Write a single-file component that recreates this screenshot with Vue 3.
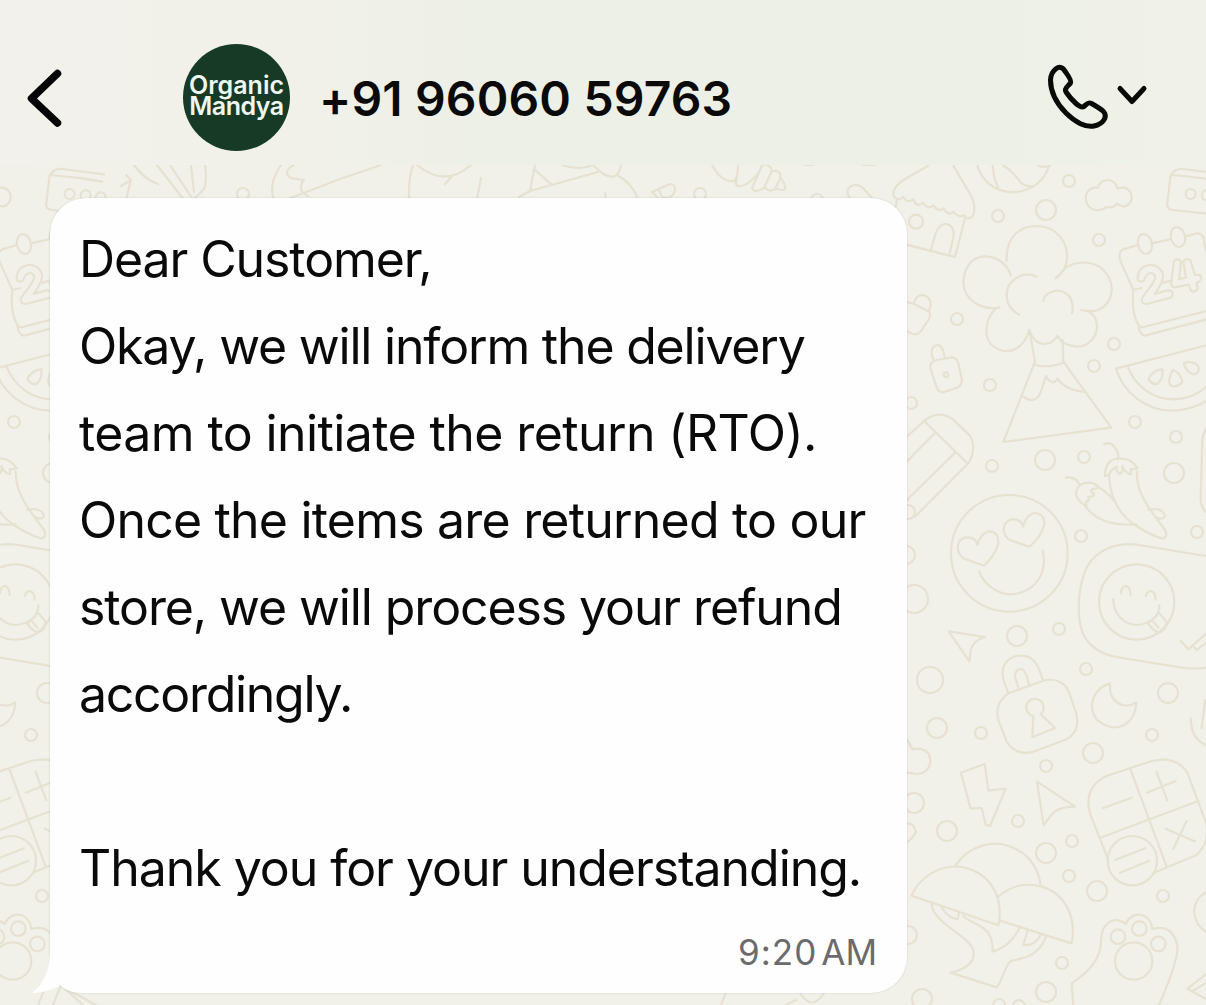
<template>
  <div class="chat">
    <svg class="wallpaper" viewBox="0 0 1206 1005" aria-hidden="true">
      <defs>
        <g id="doodles">
          <g transform="translate(890 160) scale(0.33333)">
            <path d="M115 17L40 60Q5 85 10 105Q22 128 40 110Q50 132 70 118Q80 145 100 128Q112 150 130 136Q145 158 160 145Q175 170 190 155Q205 175 222 165Q235 185 250 165Q258 140 245 110L190 17" />
            <path d="M20 120L18 140M225 175L195 291L0 240M50 255L195 291M123 270L137 220Q148 190 172 192Q196 202 190 232L178 285" />
            <circle cx="78" cy="185" r="21" />
            <path d="M262 17C275 60 310 95 370 97C430 92 465 60 477 17M308 17Q312 60 325 84M340 17Q365 30 390 65Q405 80 425 78M445 17Q462 24 480 17" />
            <path d="M622 150C590 150 580 115 593 95Q605 80 623 84Q628 62 653 60Q677 62 683 86Q708 76 722 97C732 125 712 145 692 137Q680 130 680 132Q670 145 650 141Q635 152 622 150Z" />
            <path d="M842 45L832 130Q830 148 848 150L990 165M842 45Q855 25 880 27L1005 43M842 45Q920 50 1000 65" />
            <circle cx="902" cy="102" r="15" /><circle cx="950" cy="106" r="15" /><circle cx="995" cy="112" r="15" />
            <path d="M363 347C350 305 310 285 275 290C230 297 210 355 226 395C242 432 290 452 328 442M350 303C347 240 380 198 441 198C500 198 538 250 530 303Q526 335 496 355M520 330C550 300 610 300 640 330C680 370 670 430 625 450Q600 458 574 450M440 350C400 330 350 360 350 405Q350 445 388 464M460 423C465 395 500 385 525 398Q555 417 546 460M318 445C285 475 280 530 305 555C350 592 400 570 418 510Q430 550 462 552Q490 550 502 527Q515 556 560 560C600 560 625 525 620 490Q615 460 590 452" />
            <path d="M418 510L435 605L340 846L664 803L520 605L518 540M435 615Q480 625 520 608M400 710Q425 730 445 710C460 685 460 665 468 648Q478 668 486 664Q492 673 503 655Q525 690 580 695" />
            <path d="M743 255L700 268Q682 278 692 305L730 390L755 384M820 368L845 361M785 250L840 238M885 230L920 220Q945 220 942 250L970 335M730 390C725 440 730 470 745 495Q752 505 765 500L980 445M745 495Q748 525 765 527L980 470" />
            <ellipse cx="765" cy="252" rx="21" ry="30" transform="rotate(-14 765 252)" /><ellipse cx="864" cy="231" rx="21" ry="30" transform="rotate(-14 864 231)" />
            <path d="M743 360C740 320 780 305 805 322C830 342 820 365 794 402L832 391Q850 390 848 405Q846 413 832 416L770 432Q752 432 756 415C770 390 795 370 796 350C790 330 768 340 763 360Q751 370 743 360Z" />
            <path d="M852 303Q865 292 873 305L867 358L888 352L880 305Q888 292 901 300L915 345L930 345Q938 356 927 365L920 368L923 386Q913 402 902 390L896 374L854 382Q840 380 844 365Z" />
            <path d="M678 626L1010 540M678 626C700 700 770 752 845 752C910 750 970 720 1000 680M712 617C735 680 790 718 850 718C910 717 950 690 980 645" />
            <path d="M817 628C795 628 768 655 779 662Q790 675 802 672C820 655 818 645 817 628ZM848 630C838 650 832 670 845 678Q864 682 877 666C874 650 863 635 848 630ZM882 610C900 602 920 608 926 622Q927 643 910 643C895 638 882 622 882 610Z" />
            <path d="M42 424L72 432Q75 405 100 405Q125 412 122 438L116 453Q125 465 115 480L92 515Q80 530 60 518L30 502M72 432L112 452" />
            <path d="M130 598C115 565 135 552 150 557Q160 565 164 593M140 600L185 592Q200 592 205 610L215 655Q218 675 202 683L160 697Q145 697 139 680L121 625Q118 605 140 600Z" />
            <circle cx="168" cy="644" r="7" />
          </g>
          <g transform="translate(890 400) scale(0.33333)">
            <path d="M0 157L105 60Q145 30 185 55L240 107Q262 145 235 190L75 350M105 65L232 190M135 98L0 236M195 158L10 340M0 315L55 300" />
            <circle cx="358" cy="460" r="175" />
            <path d="M282 497L220 475C195 455 200 420 225 413Q255 408 263 435Q268 405 295 394Q325 392 325 430Q317 465 282 497ZM418 440L358 420C332 400 338 367 363 359Q392 354 400 380Q405 348 432 339Q462 338 463 372Q455 410 418 440ZM267 515C285 560 330 583 362 583C430 580 475 525 458 450" />
            <path d="M642 133C665 120 688 150 684 178M645 228Q645 175 690 175Q725 175 743 205L722 208Q728 230 712 218Q700 210 697 198Q700 218 690 222Q678 218 680 200Q660 210 657 225ZM657 225C660 300 690 345 735 375Q780 405 815 415Q835 415 825 390C790 340 740 290 740 215M528 233Q555 228 568 252M590 318C545 300 550 250 595 248Q615 248 628 263L605 268Q600 275 613 282Q610 292 594 290Q600 305 587 305ZM585 318C620 365 680 378 740 373M628 263Q655 280 675 305M775 330Q820 320 825 350Q815 362 795 350" />
            <path d="M948 468L740 434C660 425 600 465 583 520C565 570 560 640 575 690C590 740 640 765 680 771L870 802Q920 810 960 800M978 60Q940 80 937 120L932 290Q930 340 978 350" />
            <circle cx="740" cy="606" r="113" />
            <path d="M693 580C695 550 720 550 722 585M767 588C775 565 797 570 797 599M670 597C670 640 700 675 742 675C780 670 810 650 808 615M775 670L800 648M808 640L830 665Q830 690 808 697Q795 697 775 672M790 665L805 683" />
            <path d="M872 722L895 748L1000 655M912 742L920 750L1010 680" />
            <path d="M176 694L286 711Q250 720 242 750L238 784Z" />
          </g>
          <g transform="translate(890 640) scale(0.33333)">
            <path d="M0 270L52 300L68 328Q95 320 115 340C130 370 115 400 80 402L52 398L0 430M0 550L52 550Q72 550 78 575Q72 590 55 605L0 610" />
            <path d="M355 160L340 118C330 75 355 50 388 47C420 45 440 65 450 95L460 122M387 149L375 112Q375 88 393 87Q408 88 418 138M355 160L460 122C500 112 530 130 540 165L560 225Q570 275 530 298L430 335Q380 350 350 305L325 240Q312 190 355 160Z" />
            <path d="M452 222A26 26 0 1 0 430 228L427 292L495 264L452 222" />
            <path d="M660 130C610 145 590 200 620 238C670 285 735 260 739 187C705 210 655 190 660 130Z" />
            <path d="M213 398L284 372L295 452L347 446L300 558L287 554L275 504L242 506ZM441 425L555 500Q500 500 480 530L461 556Z" />
            <path d="M650 408L785 363Q860 345 893 400L945 540Q965 600 920 645L795 697M655 660L600 520Q580 440 650 408M722 390L830 680M635 592L925 483M638 505L725 473M770 458L857 423M800 396L832 482M827 566L914 604M890 543L850 627M675 660L765 625M690 698L778 662" />
            <circle cx="727" cy="662" r="74" />
            <path d="M198 675C225 630 285 605 335 612C400 625 445 670 452 738M64 767C90 710 150 675 205 680C290 690 345 760 325 856ZM325 770C370 730 420 730 455 740C525 760 560 830 545 910L330 842" />
            <path d="M125 793C130 850 235 885 250 930Q260 980 182 998L320 1042C340 1020 340 980 365 962C400 955 445 950 468 890M155 803Q175 835 203 838L207 818M220 828C250 860 310 850 308 935Q360 920 388 865M412 875L400 915Q435 918 452 885" />
            <path d="M550 1100L545 1030C590 1000 635 960 633 900C635 850 670 825 707 852C725 810 780 815 787 867C850 850 875 910 855 965C845 1010 825 1050 805 1100" />
            <circle cx="731" cy="963" r="56" /><circle cx="684" cy="890" r="22" /><circle cx="748" cy="866" r="22" /><circle cx="805" cy="912" r="22" />
            <path d="M903 235Q900 300 960 320M945 180L935 265M990 750C930 750 915 785 912 812C915 850 930 870 960 880M990 1100L892 1046L970 985M905 1055L980 1010" />
          </g>
          <circle v-for="(dot, i) in dots" :key="i" :cx="dot[0]" :cy="dot[1]" :r="dot[2]" />
        </g>
      </defs>
      <g class="ink">
        <use href="#doodles" />
        <use href="#doodles" x="-1121" />
        <!-- tops of the doodles between the header and the bubble -->
        <path d="M126 175L131 180L126 200M131 180L121 186" />
        <path d="M134 165Q145 180 158 184M157 165L184 200M170 165L192 198M191 165L194 192M205 165Q208 188 201 192L195 198" />
        <path d="M281 165Q268 184 274 200M294 165C284 170 285 178 296 179L304 180Q296 190 308 196M288 199L340 179L381 165" />
        <path d="M413 165Q408 180 409 199M417 165Q445 188 471 165M453 175L445 184M481 178L477 199" />
        <path d="M535 165L530 191L519 197M535 170L552 185M530 191L598 172M562 165Q580 171 593 165L602 173Q618 183 621 165M617 175Q632 183 638 199M605 193L606 199" />
        <path d="M659 199L652 192L670 184C678 184 676 195 668 198L662 197L659 190" />
        <path d="M712 165Q722 183 734 181Q738 178 738 165M762 165C760 175 745 188 738 186Q734 184 737 178M762 165Q770 163 772 171L764 188Q755 194 752 188L762 166M773 171Q782 170 780 179L775 189Q768 193 765 187M780 177Q788 188 784 190L776 189" />
        <path d="M804 165L813 165M863 165L875 165M850 198C842 188 854 182 862 187L872 198" />
        <path d="M53 1005L61 985L83 1005M721 1005L726 992M786 1005L796 1000M800 993Q812 1012 824 993" />
      </g>
    </svg>

    <header class="topbar">
      <svg class="back" viewBox="0 0 40 64" aria-hidden="true">
        <path d="M33.500 7.500L7.500 32.500L33.500 57" />
      </svg>
      <div class="avatar"><span>Organic</span><span class="lower">Mandya</span></div>
      <h1 class="contact">+91 96060 59763</h1>
      <svg class="call" viewBox="0 0 110 80" aria-hidden="true">
        <path d="M24.5 18.5C20 11 11 18 10.500 28C10.500 52 38 77.500 54 74C63 72 68 65 63.500 59.500C61 57 55 53.500 51.500 51.500C48 49.500 47 52 44 54.500C42 56 40 55 36 51.500C31 47 28 43 26 40C23.500 36 28.500 34 30.500 31C32 28 26.500 21.500 24.500 18.500Z" />
        <path d="M80 36.500L92 49.500L104 36.500" />
      </svg>
    </header>

    <main class="thread">
      <section class="bubble">
        <svg class="tail" viewBox="0 0 50 40" aria-hidden="true">
          <path class="tail-shape" d="M18 0Q17 27 0 40Q17 39 29 32L48 8V0Z" />
        </svg>
        <p
          v-for="(line, i) in lines"
          :key="i"
          class="line"
          :style="{ letterSpacing: line.spacing + 'px' }"
        >
          {{ line.text }}
        </p>
        <time class="stamp">9:20<span class="meridiem">AM</span></time>
      </section>
    </main>
  </div>
</template>

<script setup>
const lines = [
  { text: "Dear Customer,", spacing: -1.1 },
  { text: "Okay, we will inform the delivery", spacing: -1.2 },
  { text: "team to initiate the return (RTO).", spacing: -0.6 },
  { text: "Once the items are returned to our", spacing: -0.8 },
  { text: "store, we will process your refund", spacing: -1.11 },
  { text: "accordingly.", spacing: -1.3 },
  { text: "", spacing: 0 },
  { text: "Thank you for your understanding.", spacing: -1.05 },
];

// x, y, radius
const dots = [
  [1069, 181, 6], [1046, 210, 10], [998, 216, 6], [1099, 240, 6],
  [957, 319, 6], [1114, 344, 6], [1094, 366, 6], [990, 385, 6],
  [911, 403, 6], [1135, 422, 6], [1176, 437, 6], [992, 466, 6],
  [1045, 460, 10], [1084, 457, 6], [1174, 473, 10], [908, 512, 7],
  [906, 555, 9], [1081, 536, 6], [1197, 532, 6], [914, 599, 14],
  [1017, 636, 10], [1059, 629, 6], [930, 680, 13], [1086, 669, 6],
  [1168, 693, 10], [937, 728, 10], [981, 733, 6], [1152, 735, 6],
  [1093, 753, 10], [1046, 766, 6], [914, 803, 10], [1018, 821, 6],
  [947, 831, 10], [1072, 841, 6], [1046, 853, 10], [1069, 876, 6],
  [1097, 891, 10], [1163, 896, 6], [908, 935, 9], [1062, 963, 6],
  [1046, 992, 10], [922, 999, 10], [999, 1005, 6], [1019, 1006, 6],
  [243, 194, 6], [700, 194, 6], [817, 200, 6],
];
</script>

<style>
body {
  margin: 0;
}
</style>

<style scoped>
.chat {
  position: relative;
  display: flex;
  flex-direction: column;
  width: 1206px;
  height: 1005px;
  overflow: hidden;
  background: #f2f1e9;
  font-family: Inter, "Liberation Sans", sans-serif;
  color: #0a0a0a;
}

.wallpaper {
  position: absolute;
  inset: 0;
  width: 1206px;
  height: 1005px;
}

.ink {
  fill: none;
  stroke: #e5e1d3;
  stroke-width: 2.2px;
  stroke-linecap: round;
  stroke-linejoin: round;
}

#doodles path,
#doodles circle,
#doodles ellipse {
  vector-effect: non-scaling-stroke;
}

.topbar {
  position: relative;
  display: flex;
  align-items: center;
  box-sizing: border-box;
  height: 165px;
  flex: none;
  padding: 31px 56px 1px 24px;
  background: linear-gradient(90deg, #f2f1eb 0%, #f1f1ea 24%, #edf0e6 42%, #edf0e6 80%, #f0f2e9 100%);
}

.back {
  width: 40px;
  height: 64px;
  fill: none;
  stroke: #050505;
  stroke-width: 7.5px;
  stroke-linecap: round;
  stroke-linejoin: round;
}

.avatar {
  display: flex;
  flex-direction: column;
  align-items: center;
  justify-content: center;
  box-sizing: border-box;
  width: 107px;
  height: 107px;
  margin-left: 119px;
  padding-bottom: 4px;
  border-radius: 50%;
  background: #173a27;
  color: #eef7ef;
  font-size: 25px;
  font-weight: 600;
  line-height: 21px;
}

.lower {
  letter-spacing: -0.5px;
}

.contact {
  margin: 2px 0 0 29px;
  font-size: 48px;
  font-weight: 600;
  line-height: 60px;
  letter-spacing: 0.15px;
  white-space: nowrap;
}

.call {
  width: 110px;
  height: 80px;
  margin: 0 0 11px auto;
  fill: none;
  stroke: #080a06;
  stroke-width: 5px;
  stroke-linecap: round;
  stroke-linejoin: round;
}

.thread {
  position: relative;
  padding: 33px 0 0 50px;
}

.bubble {
  position: relative;
  box-sizing: border-box;
  width: 857px;
  height: 795px;
  padding: 18px 30px 0 29px;
  border-radius: 36px 36px 36px 30px;
  background: #fefefe;
  box-shadow: 0 0 2px rgba(80, 75, 50, 0.22);
}

.tail {
  position: absolute;
  left: -18px;
  bottom: 0;
  width: 50px;
  height: 40px;
}

.tail-shape {
  fill: #fefefe;
}

.line {
  height: 87px;
  margin: 0;
  font-size: 50px;
  line-height: 87px;
  white-space: pre;
}

.stamp {
  display: flex;
  justify-content: flex-end;
  gap: 4px;
  margin-top: 18px;
  font-size: 35px;
  line-height: 44px;
  letter-spacing: 1px;
  color: #6b6b6b;
}

.meridiem {
  letter-spacing: 0;
}
</style>
